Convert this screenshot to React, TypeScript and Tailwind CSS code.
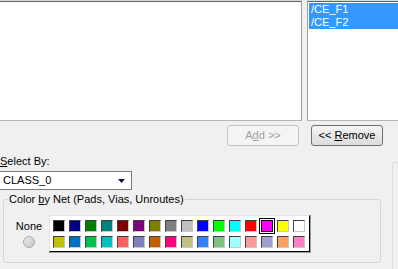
import React from "react";

const row1 = [
  "#000000", "#000080", "#008000", "#008080", "#800000", "#800080", "#808000", "#808080",
  "#c0c0c0", "#0000ff", "#00ff00", "#00ffff", "#ff0000", "#ff00ff", "#ffff00", "#ffffff",
];
const row2 = [
  "#c0c000", "#0070c0", "#00c050", "#00c0c0", "#ff6060", "#8080c0", "#c06000", "#ff0080",
  "#c0c080", "#3080ff", "#80c080", "#a0ffff", "#ff9999", "#a0a0d0", "#ffa060", "#ff80c0",
];

function Swatch({ color, selected }: { color: string; selected?: boolean }) {
  if (selected) {
    return (
      <div className="relative w-[12px] h-[12px]">
        <div className="absolute -inset-[2px] border border-black p-[1px]">
          <div className="w-full h-full border border-black" style={{ backgroundColor: color }} />
        </div>
      </div>
    );
  }
  return (
    <div
      className="w-[12px] h-[12px] border-t border-l border-t-[#404040] border-l-[#404040] border-b border-r border-b-[#c8c8c8] border-r-[#c8c8c8]"
      style={{ backgroundColor: color }}
    />
  );
}

export default function App() {
  return (
    <div
      className="w-[398px] h-[269px] overflow-hidden bg-[#f0f0f0] text-[11px] leading-[13px] text-black"
      style={{ fontFamily: '"Liberation Sans", Arial, sans-serif' }}
    >
      {/* list boxes */}
      <div className="flex h-[121px] gap-[5px]">
        <div className="w-[302px] shrink-0 h-full border-t border-t-[#d8d8d8]">
          <div className="h-full bg-white border-t border-t-[#646464] border-r border-r-[#a0a0a0] border-b border-b-[#b4b4b4]" />
        </div>
        <div className="w-[100px] shrink-0 h-full border-t border-t-[#d8d8d8]">
          <div className="h-full bg-white border-t border-t-[#646464] border-l border-l-[#a0a0a0] border-b border-b-[#b4b4b4] pt-[1px] pl-[1px]">
            <div className="bg-[#3399ff] text-white pl-[2px] h-[13px] leading-[13px]">/CE_F1</div>
            <div className="bg-[#3399ff] text-white pl-[2px] h-[13px] leading-[13px]">/CE_F2</div>
          </div>
        </div>
      </div>

      {/* buttons */}
      <div className="flex mt-[4px] pl-[227px] gap-[12px]">
        <div className="w-[72px] h-[21px] rounded-[3px] border border-[#c4c4c4] bg-[#f4f4f4] text-[#a0a0a0] flex items-center justify-center">
          <span>A<span className="underline">d</span>d &gt;&gt;</span>
        </div>
        <div className="w-[72px] h-[21px] rounded-[3px] border border-[#707070] bg-gradient-to-b from-[#f4f4f4] to-[#dcdcdc] flex items-center justify-center">
          <span>&lt;&lt; <span className="underline">R</span>emove</span>
        </div>
      </div>

      {/* lower area */}
      <div className="flex">
        <div className="w-[381px] shrink-0">
          <div className="mt-[9px]">
            <span className="underline">S</span>elect By:
          </div>
          <div className="mt-[3px] -ml-[1px] w-[133px] h-[19px] bg-white border border-[#7a7a7a] flex items-center justify-between pl-[3px] pr-[6px]">
            <span>CLASS_0</span>
            <svg width="7" height="4" viewBox="0 0 7 4">
              <path d="M0 0H7L3.5 4Z" fill="#101040" />
            </svg>
          </div>

          <div className="relative mt-[9px] ml-[3px] w-[378px] h-[64px] border border-[#d5d5d5] rounded-[3px]">
            <div className="absolute -top-[7px] left-[4px] px-[1px] bg-[#f0f0f0]">
              Color <span className="underline">b</span>y Net (Pads, Vias, Unroutes)
            </div>
            <div className="flex pt-[15px]">
              <div className="ml-[11px] w-[28px] flex flex-col items-center">
                <div className="mt-[5px]">None</div>
                <div className="mt-[3px] w-[12px] h-[12px] rounded-full border border-[#a8a8a8] bg-gradient-to-br from-[#e8e8e8] to-[#c8c8c8]" />
              </div>
              <div className="ml-[6px] border-r border-b border-[#a0a0a0]">
                <div className="w-[261px] h-[37px] bg-white border-t border-l border-[#e4e4e4] border-r border-b border-r-black border-b-black pl-[3px] pt-[4px]">
                  <div className="grid grid-cols-[repeat(16,12px)] gap-[4px]">
                    {row1.map((c, i) => (
                      <Swatch key={"a" + i} color={c} selected={i === 13} />
                    ))}
                    {row2.map((c, i) => (
                      <Swatch key={"b" + i} color={c} />
                    ))}
                  </div>
                </div>
              </div>
            </div>
          </div>
        </div>
        <div className="ml-[11px] mt-[16px] flex-1 h-[120px] border-l border-t border-[#dcdcdc] rounded-tl-[3px]" />
      </div>
    </div>
  );
}
